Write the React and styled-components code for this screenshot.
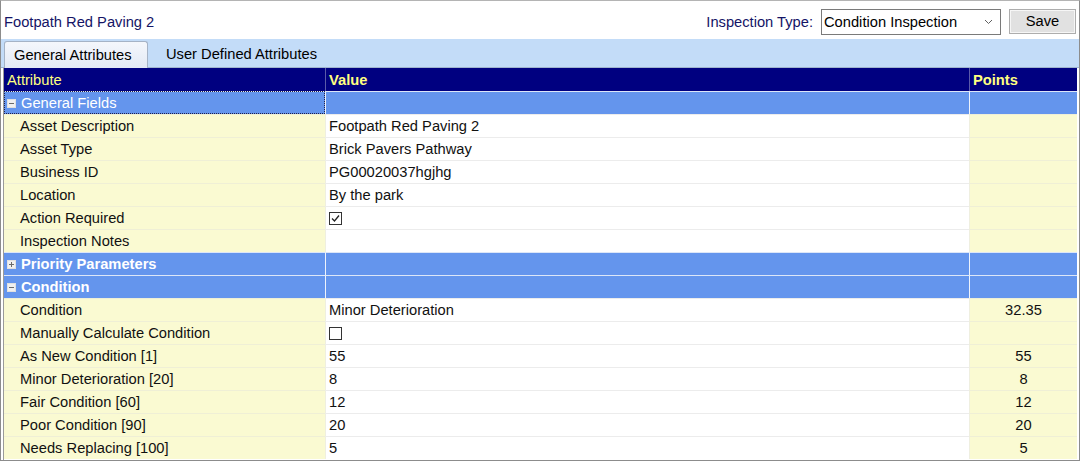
import React from 'react';
import styled, { createGlobalStyle, css } from 'styled-components';

const GlobalStyle = createGlobalStyle`
  html, body {
    margin: 0;
    padding: 0;
    background: #ffffff;
  }
  body {
    font-family: "Liberation Sans", Arial, sans-serif;
    font-size: 14.7px;
    color: #000;
  }
`;

const Frame = styled.div`
  width: 1080px;
  height: 461px;
  box-sizing: border-box;
  border: 1px solid #8c8c8c;
  border-top-color: #b4b4b4;
  display: flex;
  flex-direction: column;
  background: #fff;
`;

const TopBar = styled.div`
  height: 38px;
  flex-shrink: 0;
  display: flex;
  align-items: center;
  padding: 4px 3px 0 3px;
  box-sizing: border-box;
`;

const Title = styled.div`
  flex: 1;
  color: #141466;
`;

const FieldLabel = styled.span`
  color: #141466;
  margin-right: 8px;
`;

const Select = styled.div`
  width: 180px;
  height: 26px;
  box-sizing: border-box;
  border: 1px solid #7a7a7a;
  display: flex;
  align-items: center;
  padding-left: 2px;
  color: #000;
  margin-right: 8px;
  span { flex: 1; }
  svg { margin-right: 7px; }
`;

const SaveButton = styled.button`
  width: 67px;
  height: 25px;
  box-sizing: border-box;
  border: 1px solid #adadad;
  background: #e1e1e1;
  box-shadow: inset 0 0 0 1px #f6f6f6;
  font-family: "Liberation Sans", Arial, sans-serif;
  font-size: 14.7px;
  color: #000;
  padding: 0;
  margin-top: -2px;
`;

const TabStrip = styled.div`
  height: 29px;
  flex-shrink: 0;
  background: #c3dcf8;
  display: flex;
  align-items: flex-end;
  padding-left: 3px;
  border-bottom: 1px solid #9fb4cf;
  box-sizing: border-box;
`;

const Tab = styled.div`
  height: 26px;
  display: flex;
  align-items: center;
  box-sizing: border-box;
  color: #000;
  padding: 0 18px;
  ${p => p.$active && css`
    width: 144px;
    padding: 0 0 1px 9px;
    background: linear-gradient(#f4f7fc, #e3eaf5);
    border: 1px solid #a5b3c6;
    border-bottom: none;
    border-radius: 3px 3px 0 0;
    margin-bottom: -1px;
    height: 27px;
  `}
`;

const Grid = styled.div`
  margin: 0 1px 0 2px;
  border-left: 1px solid #9a9a9a;
  display: grid;
  grid-template-columns: 321px 644px 108px;
  grid-auto-rows: 23px;
  flex: 1;
  overflow: hidden;
`;

const HeadCell = styled.div`
  background: #000080;
  color: #ffff80;
  font-weight: ${p => (p.$bold ? 'bold' : 'normal')};
  display: flex;
  align-items: center;
  padding-left: 3px;
  border-left: ${p => (p.$first ? 'none' : '1px solid #5a5aa8')};
  box-sizing: border-box;
`;

const GroupCell = styled.div`
  background: #6495ed;
  color: #fff;
  font-weight: ${p => (p.$bold ? 'bold' : 'normal')};
  display: flex;
  align-items: center;
  box-sizing: border-box;
  border-top: 1px solid #dce6f8;
  border-left: ${p => (p.$first ? 'none' : '1px solid #eef3fc')};
  padding-left: 2px;
  ${p => p.$focus && css`
    outline: 1px dotted #20204a;
    outline-offset: -1px;
  `}
`;

const Toggle = styled.span`
  width: 7px;
  height: 7px;
  background: #f0f0f0;
  border: 1px solid #e0e0e0;
  position: relative;
  margin-right: 5px;
  margin-left: 1px;
  &::before {
    content: '';
    position: absolute;
    left: 1px;
    right: 1px;
    top: 3px;
    height: 1px;
    background: #6a6a6a;
  }
  ${p => p.$plus && css`
    &::after {
      content: '';
      position: absolute;
      top: 1px;
      bottom: 1px;
      left: 3px;
      width: 1px;
      background: #6a6a6a;
    }
  `}
`;

const Cell = styled.div`
  background: ${p => (p.$tint ? '#fafad2' : '#ffffff')};
  border-top: 1px solid ${p => (p.$tint ? '#efefd6' : '#ececec')};
  border-left: ${p => (p.$first ? 'none' : '1px solid #efefe0')};
  display: flex;
  align-items: center;
  justify-content: ${p => (p.$center ? 'center' : 'flex-start')};
  padding-left: ${p => (p.$indent ? '16px' : p.$center ? '0' : '3px')};
  box-sizing: border-box;
  color: #111;
`;

const CheckBox = styled.span`
  width: 13px;
  height: 13px;
  box-sizing: border-box;
  border: 1px solid #333;
  background: #fff;
  display: inline-flex;
  align-items: center;
  justify-content: center;
`;

const rows = [
  { group: 'General Fields', focus: true },
  { attr: 'Asset Description', value: 'Footpath Red Paving 2' },
  { attr: 'Asset Type', value: 'Brick Pavers Pathway' },
  { attr: 'Business ID', value: 'PG00020037hgjhg' },
  { attr: 'Location', value: 'By the park' },
  { attr: 'Action Required', check: true },
  { attr: 'Inspection Notes', value: '' },
  { group: 'Priority Parameters', bold: true, collapsed: true },
  { group: 'Condition', bold: true },
  { attr: 'Condition', value: 'Minor Deterioration', points: '32.35' },
  { attr: 'Manually Calculate Condition', check: false },
  { attr: 'As New Condition [1]', value: '55', points: '55' },
  { attr: 'Minor Deterioration [20]', value: '8', points: '8' },
  { attr: 'Fair Condition [60]', value: '12', points: '12' },
  { attr: 'Poor Condition [90]', value: '20', points: '20' },
  { attr: 'Needs Replacing [100]', value: '5', points: '5' },
];

function Chevron() {
  return (
    <svg width="9" height="6" viewBox="0 0 9 6">
      <path d="M1 1 L4.5 4.5 L8 1" fill="none" stroke="#606060" strokeWidth="1" />
    </svg>
  );
}

function Tick() {
  return (
    <svg width="11" height="11" viewBox="0 0 11 11">
      <path d="M2 5.5 L4.5 8 L9 2.5" fill="none" stroke="#222" strokeWidth="1.3" />
    </svg>
  );
}

export default function App() {
  return (
    <>
      <GlobalStyle />
      <Frame>
        <TopBar>
          <Title>Footpath Red Paving 2</Title>
          <FieldLabel>Inspection Type:</FieldLabel>
          <Select>
            <span>Condition Inspection</span>
            <Chevron />
          </Select>
          <SaveButton>Save</SaveButton>
        </TopBar>
        <TabStrip>
          <Tab $active>General Attributes</Tab>
          <Tab>User Defined Attributes</Tab>
        </TabStrip>
        <Grid>
          <HeadCell $first>Attribute</HeadCell>
          <HeadCell $bold>Value</HeadCell>
          <HeadCell $bold>Points</HeadCell>
          {rows.map((r, i) =>
            r.group ? (
              <React.Fragment key={i}>
                <GroupCell $first $bold={r.bold} $focus={r.focus}>
                  <Toggle $plus={r.collapsed} />
                  {r.group}
                </GroupCell>
                <GroupCell />
                <GroupCell />
              </React.Fragment>
            ) : (
              <React.Fragment key={i}>
                <Cell $first $tint $indent>{r.attr}</Cell>
                <Cell>
                  {r.check !== undefined ? (
                    <CheckBox>{r.check && <Tick />}</CheckBox>
                  ) : (
                    r.value
                  )}
                </Cell>
                <Cell $tint $center>{r.points || ''}</Cell>
              </React.Fragment>
            )
          )}
        </Grid>
      </Frame>
    </>
  );
}
